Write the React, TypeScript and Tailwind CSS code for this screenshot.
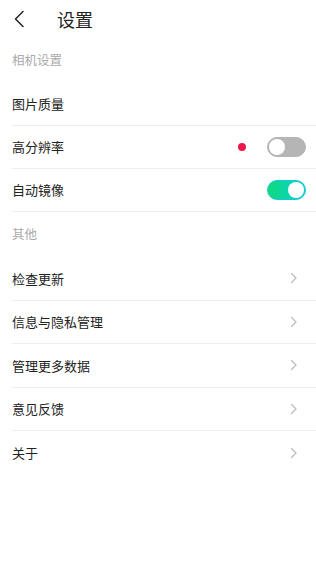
import React, { useState } from "react"

function Chevron() {
  return (
    <svg width="8" height="12" viewBox="0 0 8 12" fill="none">
      <path d="M1.5 1.5L6 6L1.5 10.5" stroke="#bdbdbd" strokeWidth="1.3" strokeLinecap="round" strokeLinejoin="round" />
    </svg>
  )
}

function Toggle({ on, onClick }: { on: boolean; onClick: () => void }) {
  return (
    <button
      onClick={onClick}
      className={`relative w-[39px] h-[20px] rounded-full ${
        on ? "bg-gradient-to-r from-[#12d97a] to-[#16d0cf] border border-[#18c9dc]" : "bg-[#b5b5b5] border border-[#b5b5b5]"
      }`}
    >
      <span
        className={`absolute top-[1px] w-[16px] h-[16px] rounded-full bg-white ${on ? "right-[1px]" : "left-[1px]"}`}
      />
    </button>
  )
}

const others = ["检查更新", "信息与隐私管理", "管理更多数据", "意见反馈", "关于"]

export default function App() {
  const [hiRes, setHiRes] = useState(false)
  const [mirror, setMirror] = useState(true)

  return (
    <div className="w-[316px] h-[561px] bg-white text-[#222] font-['Noto_Sans_CJK_SC',sans-serif]">
      <div className="h-[38px] flex items-center pl-[13px]">
        <svg width="12" height="18" viewBox="0 0 12 18" fill="none">
          <path d="M10 1.5L2.5 9L10 16.5" stroke="#222" strokeWidth="1.5" strokeLinecap="round" strokeLinejoin="round" />
        </svg>
        <span className="ml-[32px] text-[18px] leading-none">设置</span>
      </div>

      <div className="h-[45px] flex items-center pl-[12px] text-[12.5px] text-[#aaa]">相机设置</div>
      <div className="pl-[12px]">
        <div className="h-[43px] flex items-center text-[13px] border-b border-[#efefef]">图片质量</div>
        <div className="h-[43px] flex items-center text-[13px] border-b border-[#efefef] pr-[10px]">
          <span className="flex-1">高分辨率</span>
          <span className="w-[8px] h-[8px] rounded-full bg-[#f0164b] mr-[21px]" />
          <Toggle on={hiRes} onClick={() => setHiRes(!hiRes)} />
        </div>
        <div className="h-[43px] flex items-center text-[13px] border-b border-[#efefef] pr-[10px]">
          <span className="flex-1">自动镜像</span>
          <Toggle on={mirror} onClick={() => setMirror(!mirror)} />
        </div>
      </div>

      <div className="h-[45px] flex items-center pl-[12px] text-[12.5px] text-[#aaa]">其他</div>
      <div className="pl-[12px]">
        {others.map((label, i) => (
          <div
            key={label}
            className={`h-[43.5px] flex items-center text-[13px] pr-[18px] ${i < others.length - 1 ? "border-b border-[#efefef]" : ""}`}
          >
            <span className="flex-1">{label}</span>
            <Chevron />
          </div>
        ))}
      </div>
    </div>
  )
}
